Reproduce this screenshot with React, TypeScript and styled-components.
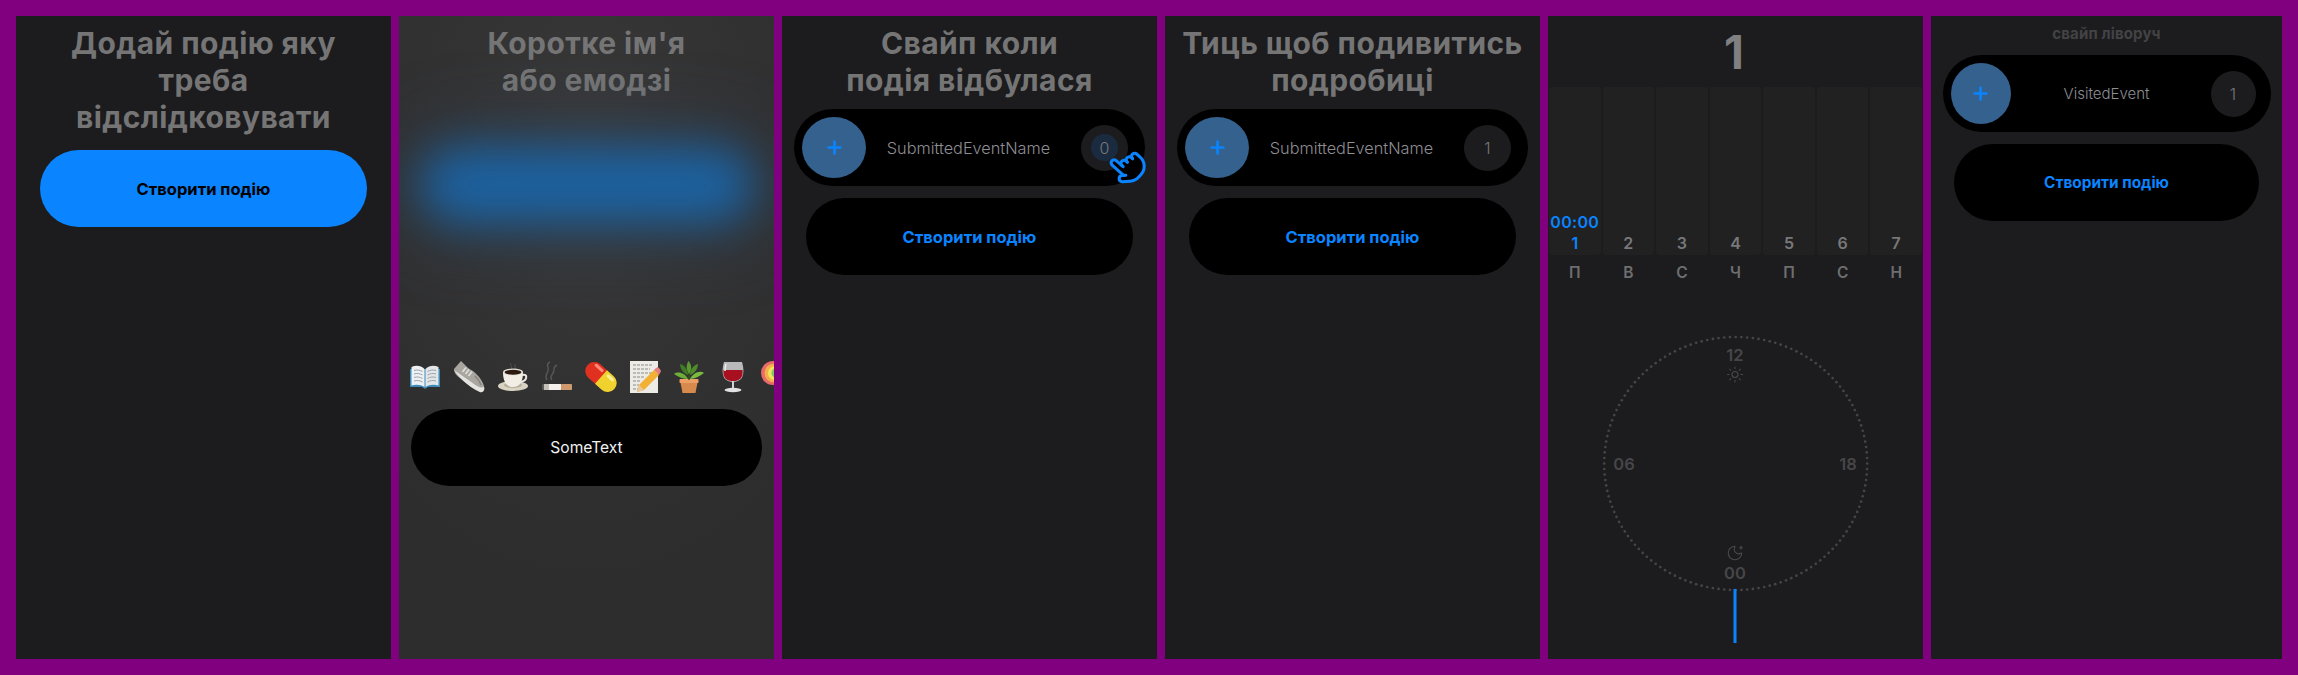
import React from "react";
import styled, { createGlobalStyle } from "styled-components";
import { Sun, MoonStar } from "lucide-react";

const Global = createGlobalStyle`
  html, body { margin: 0; padding: 0; background: #800080; }
  body { font-family: Inter, "Noto Sans", sans-serif; }
`;

const Page = styled.div`
  width: 2298px;
  height: 675px;
  box-sizing: border-box;
  padding: 16px;
  display: flex;
  gap: 8px;
  background: #800080;
  overflow: hidden;
`;

const Panel = styled.section<{ $width?: number }>`
  flex: 0 0 ${(p) => p.$width ?? 375}px;
  height: 643px;
  box-sizing: border-box;
  background: #1c1c1e;
  display: flex;
  flex-direction: column;
  align-items: center;
  overflow: hidden;
  position: relative;
`;

const FrostedPanel = styled(Panel)`
  background: radial-gradient(ellipse 300px 420px at 50% 22%, #3a3a3b 0%, #333334 45%, #2d2d2e 100%);
`;

const Title = styled.h1`
  margin: 9px 0 0;
  font-size: 30px;
  line-height: 37px;
  font-weight: 700;
  letter-spacing: 0.4px;
  color: #757576;
  text-align: center;
  white-space: nowrap;
`;

const SmallTitle = styled.h2`
  margin: 9px 0 0;
  font-size: 15px;
  line-height: 18px;
  font-weight: 700;
  letter-spacing: 0.15px;
  color: #434345;
  text-align: center;
`;

const Pill = styled.button<{ $tone: "primary" | "dark"; $width: number; $top: number }>`
  flex: none;
  width: ${(p) => p.$width}px;
  height: 77px;
  margin-top: ${(p) => p.$top}px;
  border: 0;
  border-radius: 38.5px;
  font-family: inherit;
  font-size: ${(p) => (p.$width < 320 ? 15.4 : 16.5)}px;
  font-weight: 700;
  background: ${(p) => (p.$tone === "primary" ? "#0a84ff" : "#000")};
  color: ${(p) => (p.$tone === "primary" ? "#000" : "#0a84ff")};
`;

const BlurredField = styled.div`
  flex: none;
  width: 332px;
  height: 76px;
  margin-top: 48px;
  border-radius: 38px;
  background: #1c619f;
  filter: blur(22px);
  box-shadow: 0 0 40px 24px rgba(46, 66, 86, 0.5);
`;

const EmojiRow = styled.div`
  align-self: stretch;
  display: flex;
  gap: 12px;
  padding-left: 10px;
  margin-top: 138px;
  height: 32px;
`;

const NameField = styled.div`
  flex: none;
  width: 351px;
  height: 77px;
  margin-top: 16px;
  border-radius: 38.5px;
  background: #000;
  color: #f0f0f0;
  font-size: 15.6px;
  font-weight: 400;
  display: flex;
  align-items: center;
  justify-content: center;
`;

const EventRow = styled.div<{ $width: number; $top: number }>`
  flex: none;
  position: relative;
  width: ${(p) => p.$width}px;
  height: 77px;
  margin-top: ${(p) => p.$top}px;
  box-sizing: border-box;
  padding: 0 ${(p) => (p.$width < 340 ? 15 : 17)}px 0 8px;
  border-radius: 38.5px;
  background: #000;
  display: grid;
  grid-template-columns: 1fr auto 1fr;
  align-items: center;
`;

const AddCircle = styled.div<{ $w: number }>`
  width: ${(p) => p.$w}px;
  height: 61px;
  border-radius: 50%;
  background: #34618e;
  color: #0a84ff;
  display: flex;
  align-items: center;
  justify-content: center;
`;

const EventName = styled.span<{ $size: number }>`
  font-size: ${(p) => p.$size}px;
  font-weight: 300;
  color: #8e8e93;
  transform: translateX(3.5px);
`;

const CountBadge = styled.div<{ $w: number }>`
  justify-self: end;
  position: relative;
  width: ${(p) => p.$w}px;
  height: 46px;
  border-radius: 50%;
  background: #1c1c1e;
  color: #77777a;
  font-size: 16px;
  font-weight: 300;
  display: flex;
  align-items: center;
  justify-content: center;
`;

const TouchGlow = styled.i`
  position: absolute;
  left: 50%;
  top: 50%;
  width: 27px;
  height: 27px;
  margin: -13.5px 0 0 -13.5px;
  border-radius: 50%;
  background: #1b2b3f;
`;

const CountText = styled.span`
  position: relative;
`;

const HandSlot = styled.svg`
  position: absolute;
  left: 315px;
  top: 39px;
  width: 37px;
  height: 37px;
  overflow: visible;
`;

const BigNumber = styled.div`
  flex: none;
  height: 71px;
  font-size: 46px;
  line-height: 72px;
  font-weight: 700;
  color: #808082;
  transform: translateX(-1.5px);
`;

const Week = styled.div`
  flex: none;
  align-self: stretch;
  height: 168px;
  box-sizing: border-box;
  padding: 0 1px;
  display: grid;
  grid-template-columns: repeat(7, 1fr);
  gap: 2px;
`;

const DayBar = styled.div<{ $active?: boolean }>`
  background: #212122;
  border-radius: 3px;
  display: flex;
  flex-direction: column;
  align-items: center;
  justify-content: flex-end;
  padding-bottom: 2px;
  color: ${(p) => (p.$active ? "#0a84ff" : "#78787a")};
`;

const TimeLabel = styled.div`
  font-size: 16px;
  line-height: 22px;
  font-weight: 600;
  letter-spacing: 0.3px;
  color: #0a84ff;
`;

const DayNumber = styled.div`
  font-size: 16px;
  line-height: 20px;
  font-weight: 600;
`;

const DayNames = styled.div`
  flex: none;
  align-self: stretch;
  height: 36px;
  box-sizing: border-box;
  padding: 0 1px;
  display: grid;
  grid-template-columns: repeat(7, 1fr);
  gap: 2px;
`;

const DayName = styled.div`
  font-size: 15.5px;
  line-height: 36px;
  font-weight: 600;
  color: #6e6e70;
  text-align: center;
`;

const ClockSvg = styled.svg`
  flex: none;
  width: 375px;
  height: 352px;
  overflow: visible;
`;

const ClockLabel = styled.text`
  font-family: Inter, sans-serif;
  font-size: 16.5px;
  font-weight: 600;
  fill: #464648;
  text-anchor: middle;
  dominant-baseline: central;
`;

const Glyph: React.FC<{ children: React.ReactNode }> = ({ children }) => (
  <svg width="32" height="32" viewBox="0 0 32 32" style={{ flex: "none" }}>
    {children}
  </svg>
);

const Book = () => (
  <Glyph>
    <path d="M1 8 L1 26 L13 26 L16 28 L19 26 L31 26 L31 8 Z" fill="#3c8ab8" />
    <path d="M2.5 6 C7 4 12 4.5 15.5 8 L15.5 26 C12 23.5 7 23 2.5 24.5 Z" fill="#eef1f3" />
    <path d="M29.5 6 C25 4 20 4.5 16.5 8 L16.5 26 C20 23.5 25 23 29.5 24.5 Z" fill="#e2e6e9" />
    <path d="M5 9.5 C8 8.6 11 9 13.5 10.5 M5 13 C8 12 11 12.5 13.5 14 M5 16.5 C8 15.5 11 16 13.5 17.5 M5 20 C8 19 11 19.5 13.5 21 M27 9.5 C24 8.6 21 9 18.5 10.5 M27 13 C24 12 21 12.5 18.5 14 M27 16.5 C24 15.5 21 16 18.5 17.5 M27 20 C24 19 21 19.5 18.5 21" stroke="#9aa3aa" strokeWidth="1" fill="none" />
  </Glyph>
);

const Shoe = () => (
  <Glyph>
    <path d="M1 8 L8 0 L12 4 C14 6 16 8 19 9.5 C23 12 29 18 31 25 C32 29 30 32 27 31 C21 29 13 22 8 18 C4 15 1 12 1 8 Z" fill="#a9a6a0" />
    <path d="M1 9 C5 15 14 25 27 31 C30 32 32 29 31 26 C28 27 25 26 21 23 C14 18 7 13 1 9 Z" fill="#e4e3df" />
    <path d="M13 6.5 L9.5 11 M16 8.5 L12.5 13 M19 10.5 L15.5 15" stroke="#dededa" strokeWidth="1.7" />
    <path d="M22 15 C25 18 27 21 28 24" stroke="#85827c" strokeWidth="1.4" fill="none" />
  </Glyph>
);

const Coffee = () => (
  <Glyph>
    <path d="M14 2 C12 4 16 5 14 8 M18 3 C17 4 19 6 18 8" stroke="#55524e" strokeWidth="1" fill="none" />
    <ellipse cx="16" cy="25" rx="15" ry="5" fill="#d9d3c4" />
    <ellipse cx="16" cy="24" rx="9" ry="3" fill="#b5ae9d" />
    <path d="M25 14 C31 12 31 20 23 21" stroke="#eeeae0" strokeWidth="2" fill="none" />
    <path d="M6 11 C6 20 9 26 16 26 C23 26 26 20 26 11 Z" fill="#f2eee6" />
    <ellipse cx="16" cy="11" rx="10" ry="3.4" fill="#e6e1d6" />
    <ellipse cx="16" cy="11.3" rx="8.4" ry="2.5" fill="#2c1a10" />
  </Glyph>
);

const Cigarette = () => (
  <Glyph>
    <path d="M6 19 C2 14 9 12 7 6 C6 4 7 2 9 1 M11 19 C7 15 14 13 13 8 C13 6 14 5 16 4" stroke="#58585a" strokeWidth="1.4" fill="none" />
    <rect x="1" y="23" width="8" height="6" rx="1.2" fill="#5d5a56" />
    <rect x="3" y="23" width="5" height="6" fill="#c4c0b8" />
    <rect x="8" y="23" width="12" height="6" fill="#f4f1ec" />
    <rect x="20" y="23" width="11" height="6" rx="0.8" fill="#d19a6c" />
  </Glyph>
);

const Capsule = () => (
  <Glyph>
    <g transform="rotate(42 16 16)">
      <path d="M17 7 L7 7 A9 9 0 0 0 7 25 L17 25 Z" fill="#e0301f" />
      <path d="M16 7 L25 7 A9 9 0 0 1 25 25 L16 25 Z" fill="#f0d22f" />
      <rect x="3" y="9" width="11" height="3" rx="1.5" fill="#ff8a78" />
      <rect x="19" y="9" width="9" height="3" rx="1.5" fill="#fbf09a" />
    </g>
  </Glyph>
);

const Memo = () => (
  <Glyph>
    <rect x="1" y="0" width="28" height="32" fill="#ecebe6" />
    <path d="M4 4 H24 M4 8 H21 M4 12 H24 M4 16 H15 M4 20 H12 M4 24 H10 M4 28 H12" stroke="#8b8b88" strokeWidth="1" strokeDasharray="3 1" />
    <path d="M8 31 L10 24 L25 9 L30 14 L15 29 Z" fill="#f2b134" />
    <path d="M25 9 L27 7 C28 6 29 6 30 7 L31.5 9 C32 10 32 11 31 12 L30 14 Z" fill="#e57f7a" />
    <path d="M8 31 L10 24 L15 29 Z" fill="#e9c79e" />
  </Glyph>
);

const Plant = () => (
  <Glyph>
    <path d="M7 19 H25 L22.5 32 H9.5 Z" fill="#d88a4c" />
    <rect x="6.5" y="18" width="19" height="4" rx="1" fill="#eda066" />
    <path d="M16 19 V7" stroke="#33501f" strokeWidth="1.4" />
    <path d="M16 13 C13 9 13 4 15.5 0 C19 4 19 9 16 13 Z" fill="#5a9a2f" />
    <path d="M15 18 C11 18 5 16 1 13 C5 10 12 12 15 18 Z" fill="#6cae38" />
    <path d="M17 18 C21 18 27 15 31 12 C27 9 20 12 17 18 Z" fill="#7bbb3f" />
    <path d="M15 14 C11 13 7 8 7 3 C11 4 15 8 15 14 Z" fill="#3f7c25" />
    <path d="M17 14 C21 13 25 8 25 3 C21 4 17 8 17 14 Z" fill="#4e8c2a" />
  </Glyph>
);

const Wine = () => (
  <Glyph>
    <path d="M7 1 H25 C27 8 27 14 24 18 C22 20 19 21 16 21 C13 21 10 20 8 18 C5 14 5 8 7 1 Z" fill="#b9b9bb" />
    <path d="M6.5 9 H25.5 C26 13 25 16 23.5 17.5 C21.5 19.5 19 20 16 20 C13 20 10.5 19.5 8.5 17.5 C7 16 6 13 6.5 9 Z" fill="#a9101f" />
    <rect x="15" y="20" width="2" height="8" fill="#d4d4d6" />
    <ellipse cx="16" cy="29" rx="8.5" ry="2.2" fill="#e2e2e4" />
    <path d="M9 3 C8 6 8 8 8 10" stroke="#ececec" strokeWidth="1.5" fill="none" />
  </Glyph>
);

const Lollipop = () => (
  <Glyph>
    <circle cx="12" cy="12" r="12" fill="#e86a6a" />
    <circle cx="13" cy="12" r="9.5" fill="#f3b04a" />
    <circle cx="14" cy="12" r="7" fill="#f4e35a" />
    <circle cx="15" cy="12" r="4.6" fill="#79c96b" />
    <circle cx="16" cy="12" r="2.4" fill="#57a6e0" />
  </Glyph>
);

const Plus: React.FC<{ size: number }> = ({ size }) => (
  <svg width={size} height={size} viewBox="0 0 14 14">
    <path d="M7 1.5 V12.5 M1.5 7 H12.5" stroke="currentColor" strokeWidth="2.4" strokeLinecap="round" />
  </svg>
);

const Hand = () => (
  <HandSlot viewBox="0 0 24 24">
    <g transform="rotate(-48 12 12)" fill="none" stroke="#0a84ff" strokeWidth="2" strokeLinecap="round" strokeLinejoin="round">
      <path
        fill="#000"
        d="M18 11a2 2 0 1 1 4 0v3a8 8 0 0 1-8 8h-2c-2.8 0-4.5-.86-5.99-2.34l-3.6-3.6a2 2 0 0 1 2.83-2.82L7 15V4a2 2 0 0 1 4 0v5a2 2 0 0 1 4 0v1a2 2 0 0 1 3 1z"
        stroke="none"
      />
      <path d="M18 11v-1a2 2 0 0 0-2-2a2 2 0 0 0-2 2" />
      <path d="M14 10V9a2 2 0 0 0-2-2a2 2 0 0 0-2 2v1" />
      <path d="M10 9.5V4a2 2 0 0 0-2-2a2 2 0 0 0-2 2v10" />
      <path d="M18 11a2 2 0 1 1 4 0v3a8 8 0 0 1-8 8h-2c-2.8 0-4.5-.86-5.99-2.34l-3.6-3.6a2 2 0 0 1 2.83-2.82L7 15" />
    </g>
  </HandSlot>
);

const Clock = () => {
  const cx = 187.7;
  const cy = 172.5;
  const dots = Array.from({ length: 144 }, (_, i) => {
    const a = (i / 144) * Math.PI * 2;
    return <circle key={i} cx={cx + 131.5 * Math.cos(a)} cy={cy + 126.5 * Math.sin(a)} r="1.35" fill="#454547" />;
  });
  return (
    <ClockSvg viewBox="0 0 375 352">
      {dots}
      <ClockLabel x={187} y={64}>12</ClockLabel>
      <ClockLabel x={187} y={281.5}>00</ClockLabel>
      <ClockLabel x={76} y={173}>06</ClockLabel>
      <ClockLabel x={300} y={173}>18</ClockLabel>
      <Sun x={178} y={74.5} width={18} height={18} color="#4a4a4c" strokeWidth={1.4} />
      <MoonStar x={178} y={253} width={18} height={18} color="#4a4a4c" strokeWidth={1.4} />
      <rect x={185.5} y={298} width={3} height={54} fill="#0a84ff" />
    </ClockSvg>
  );
};

const days = ["П", "В", "С", "Ч", "П", "С", "Н"];

const EventLine: React.FC<{
  name: string;
  count: string;
  width: number;
  top: number;
  circle: number;
  badge: number;
  textSize: number;
  touched?: boolean;
}> = ({ name, count, width, top, circle, badge, textSize, touched }) => (
  <EventRow $width={width} $top={top}>
    <AddCircle $w={circle}>
      <Plus size={15} />
    </AddCircle>
    <EventName $size={textSize}>{name}</EventName>
    <CountBadge $w={badge}>
      {touched && <TouchGlow />}
      <CountText>{count}</CountText>
    </CountBadge>
    {touched && <Hand />}
  </EventRow>
);

export default function App() {
  return (
    <>
      <Global />
      <Page>
        <Panel>
          <Title>
            Додай подію яку
            <br />
            треба
            <br />
            відслідковувати
          </Title>
          <Pill $tone="primary" $width={327} $top={14}>Створити подію</Pill>
        </Panel>
        <FrostedPanel>
          <Title>
            Коротке ім'я
            <br />
            або емодзі
          </Title>
          <BlurredField />
          <EmojiRow>
            <Book />
            <Shoe />
            <Coffee />
            <Cigarette />
            <Capsule />
            <Memo />
            <Plant />
            <Wine />
            <Lollipop />
          </EmojiRow>
          <NameField>SomeText</NameField>
        </FrostedPanel>
        <Panel>
          <Title>
            Свайп коли
            <br />
            подія відбулася
          </Title>
          <EventLine name="SubmittedEventName" count="0" width={351} top={10} circle={64} badge={47} textSize={16.3} touched />
          <Pill $tone="dark" $width={327} $top={12}>Створити подію</Pill>
        </Panel>
        <Panel>
          <Title>
            Тиць щоб подивитись
            <br />
            подробиці
          </Title>
          <EventLine name="SubmittedEventName" count="1" width={351} top={10} circle={64} badge={47} textSize={16.3} />
          <Pill $tone="dark" $width={327} $top={12}>Створити подію</Pill>
        </Panel>
        <Panel>
          <BigNumber>1</BigNumber>
          <Week>
            {days.map((_, i) => (
              <DayBar key={i} $active={i === 0}>
                {i === 0 && <TimeLabel>00:00</TimeLabel>}
                <DayNumber>{i + 1}</DayNumber>
              </DayBar>
            ))}
          </Week>
          <DayNames>
            {days.map((d, i) => (
              <DayName key={i}>{d}</DayName>
            ))}
          </DayNames>
          <Clock />
        </Panel>
        <Panel $width={351}>
          <SmallTitle>свайп ліворуч</SmallTitle>
          <EventLine name="VisitedEvent" count="1" width={328} top={12} circle={60} badge={45} textSize={15} />
          <Pill $tone="dark" $width={305} $top={12}>Створити подію</Pill>
        </Panel>
      </Page>
    </>
  );
}
